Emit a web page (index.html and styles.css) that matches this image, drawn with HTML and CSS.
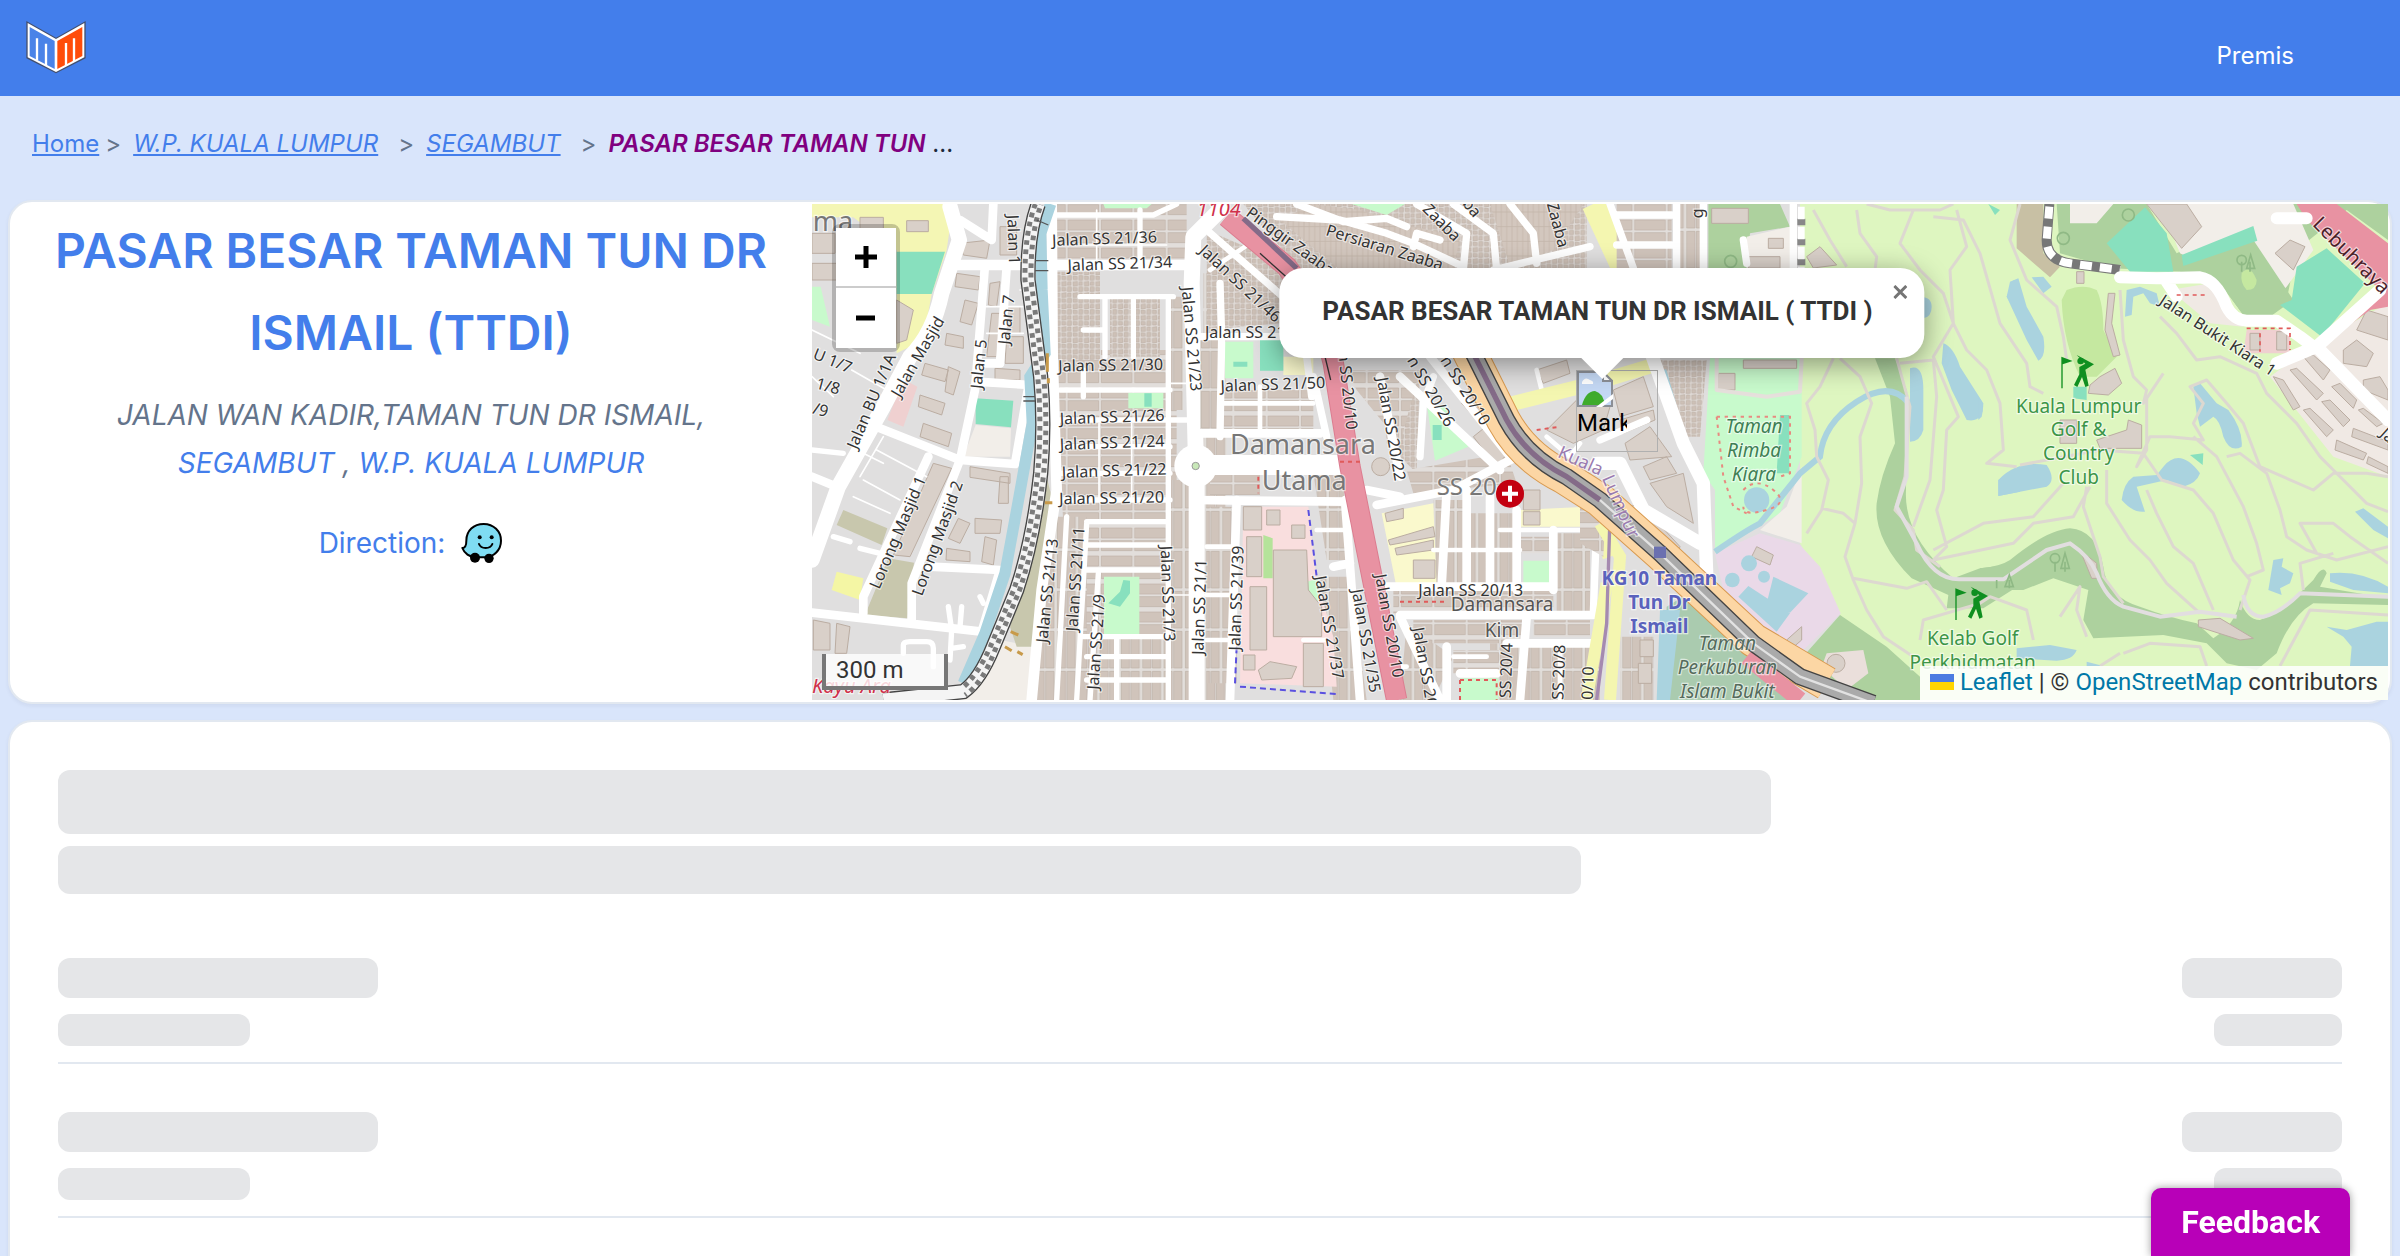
FILE: index.html
```html
<!DOCTYPE html>
<html lang="ms">
<head>
<meta charset="utf-8">
<meta name="viewport" content="width=device-width, initial-scale=1">
<title>PASAR BESAR TAMAN TUN DR ISMAIL (TTDI)</title>
<link rel="stylesheet" href="styles.css">
</head>
<body>
<div class="page">
<header class="topbar">
  <a class="logo" href="#" aria-label="Home">
    <svg width="60" height="54" viewBox="0 0 180 162">
      <path d="M1 0 90 50 179 0V112L90 157 1 112Z" fill="#44506e"/>
      <path d="M5 6 90 54 175 6V109L90 153 5 109Z" fill="#fff"/>
      <path d="M11 18 86 60V144L11 105Z" fill="#4a83e8"/>
      <path d="M169 18 94 60V144L169 105Z" fill="#ff4d0a"/>
      <path d="M33 118V52M60 132V68M120 132V66M144 120V52" fill="none" stroke="#fff" stroke-width="7"/>
    </svg>
  </a>
  <nav><a class="nav-link" href="#">Premis</a></nav>
</header>

<nav class="crumbs" aria-label="Breadcrumb">
  <a href="#">Home</a><span class="sep first">&gt;</span>
  <a class="it" href="#">W.P. KUALA LUMPUR</a><span class="sep">&gt;</span>
  <a class="it" href="#">SEGAMBUT</a><span class="sep">&gt;</span>
  <span class="here"><em>PASAR BESAR TAMAN TUN</em> ...</span>
</nav>

<main class="content">
<section class="card place">
  <div class="info">
    <h1>PASAR BESAR TAMAN TUN DR ISMAIL (TTDI)</h1>
    <p class="address">JALAN WAN KADIR,TAMAN TUN DR ISMAIL,<br><a href="#">SEGAMBUT</a> , <a href="#">W.P. KUALA LUMPUR</a></p>
    <p class="direction">Direction:
      <a href="#" aria-label="Waze"><svg width="42" height="42" viewBox="0 0 126 126">
        <path d="M4 78C14 78 16 70 16 56 16 26 38 6 68 6S120 28 120 56 98 106 72 106H44C26 106 10 94 4 78Z" fill="#7fdcf2" stroke="#000" stroke-width="6" stroke-linejoin="round"/>
        <circle cx="42" cy="107" r="15"/><circle cx="84" cy="109" r="14"/>
        <circle cx="56" cy="46" r="6"/><circle cx="92" cy="46" r="6"/>
        <path d="M54 66C60 82 88 82 94 66" fill="none" stroke="#000" stroke-width="6" stroke-linecap="round"/>
      </svg></a>
    </p>
  </div>

  <div class="map">
    <svg class="tiles" viewBox="36 42 4728 1488" preserveAspectRatio="xMidYMid slice" aria-hidden="true">
      <defs>
        <pattern id="homes" width="16" height="44" patternUnits="userSpaceOnUse"><rect width="16" height="44" fill="#d3c7be"/><path d="M0 22H16M8 0V44" stroke="#c2b3a8" stroke-width="2"/></pattern>
        <pattern id="estate" width="100" height="84" patternUnits="userSpaceOnUse"><rect width="100" height="84" fill="#e2dedb"/><path d="M4 6H96V36H4ZM4 44H96V74H4Z" fill="#d0c4bb" stroke="#beb0a6" stroke-width="2"/></pattern>
        <pattern id="estatev" width="64" height="120" patternUnits="userSpaceOnUse"><rect width="64" height="120" fill="#e2dedb"/><path d="M4 4H29V114H4ZM33 4H58V114H33Z" fill="#d0c4bb" stroke="#beb0a6" stroke-width="2"/></pattern>
        <pattern id="villas" width="34" height="34" patternUnits="userSpaceOnUse"><rect width="34" height="34" fill="#e0dad6"/><path d="M3 4 16 2 17 15 4 17ZM21 19H32V32H20ZM22 3H31V14H21ZM3 21H15V31H4Z" fill="#cec1b7" stroke="#beb0a6" stroke-width="2"/></pattern>
        <g id="golfer"><path d="M4 100V5L38 18 8 28V100Z"/><circle cx="62" cy="18" r="10"/><path d="M50 0 102 28 76 44 86 92 76 96 66 66 52 96 42 90 58 58 58 36 76 26Z"/></g>
      </defs>
      <rect x="36" y="42" width="4728" height="1488" fill="#e0dfdf"/>

      <g class="west">
        <path fill="#f4f6b4" d="M36 42H460L440 180 395 312 370 450 290 490V180L160 82H36Z"/>
        <path class="bld" d="M180 82H250V130H180ZM320 92H385V125H320ZM36 220H110V270H36ZM36 130H105V190H36ZM290 330 340 360 320 450 290 460ZM470 250 540 260 535 300 465 290ZM495 330 535 340 515 405 480 395ZM440 430 490 440V475L435 465ZM375 520 445 540 435 575 365 555ZM445 530 480 545 460 615 435 605ZM360 615 435 640 425 675 355 650ZM370 700 455 730 445 770 360 740ZM510 830 630 850V880L510 862ZM600 860H625V940H595ZM525 985 605 990 600 1030H525ZM475 985 510 1000 480 1060 445 1045ZM440 1075 510 1085V1115L438 1110ZM555 1040 590 1050 580 1125 545 1115ZM480 160 570 150 560 205 490 195ZM600 110H650V195H600ZM570 280 600 275 590 350 565 345ZM585 535 660 540V570L585 568ZM400 820 455 835 330 1100 280 1095ZM40 1290 90 1300V1380H40ZM110 1300 150 1310 140 1390H105ZM575 370H600L590 500H560ZM620 350H660V430H615ZM620 440H670V520H615Z"/>
        <path fill="#88e0be" d="M290 185H435L395 312H290ZM527 625 640 632 633 712 527 702Z"/>
        <path fill="#c8facc" d="M36 290H62L90 410 36 390Z"/>
        <path fill="#efd0d0" d="M310 568 352 590 310 710 262 690Z"/>
        <path fill="#f2eee9" d="M527 705 633 715 630 800H490Z"/>
        <path fill="#c8c7ad" d="M130 960 262 1015 245 1065 110 1005ZM265 1105 342 1118 322 1285 195 1275Z"/>
        <path fill="#f4f6a4" d="M110 1145 190 1165 180 1230 95 1200Z"/>
        <path fill="url(#estate)" d="M760 42H1160V240H760ZM760 480H1130V1000H790ZM850 960H1110V1340H740Z"/>
        <path fill="url(#villas)" d="M770 245H900V510H770ZM930 320H1080V500H930Z"/>
        <path fill="url(#estatev)" d="M1110 320H1150V660H1110ZM700 980H860V1530H700ZM860 1340H1110V1530H860ZM1110 870H1170V1530H1110ZM1210 250H1280V1530H1210Z"/>
        <path fill="#f2eee9" d="M600 1350 700 1370V1530H480Z"/>
        <path fill="#c8c7ad" d="M740 860 762 950 740 1150 700 1370H650L630 1310 700 1050Z"/>
        <path fill="#c8facc" d="M910 42H1055L1040 55H915ZM985 608H1090V655H985ZM912 1160H1018V1335H912Z"/>
        <path fill="#88e0be" d="M1033 610H1055V650H1033ZM970 1170 990 1172V1210L960 1250 925 1240 960 1205Z"/>
        <g class="roads">
          <path stroke-width="46" d="M450 50 478 150 425 310Q400 430 330 500L250 650 115 890 36 1110"/>
          <path stroke-width="26" d="M240 715 480 810 645 822 690 560M555 225 525 600 480 810M385 800 190 1220V1270M480 810 335 1180V1290M36 1268 545 1325 600 1140 390 1130M36 860 110 890M480 90 575 150 580 42M620 230 600 520 550 520M530 575 690 585"/>
          <path stroke-width="16" d="M36 780 130 790M100 1040 150 1055M180 1075 240 1090M540 1220 550 1240M445 1250 455 1320 450 1410M485 1250 480 1310M490 1370 455 1375M310 1390V1365Q310 1355 330 1355H380Q400 1355 400 1375V1430"/>
          <path stroke-width="32" d="M470 225H1160M755 42 758 500 770 900 725 1200 695 1530"/>
          <path stroke-width="48" d="M1260 60 1180 140 1175 280 1187 780M1190 870V1530"/>
          <path stroke-width="16" d="M1105 330V1530M760 75H1060L1130 42M840 320H1120M850 420H915M915 320V500M1000 330V500M850 540V620M780 600H1110M780 690H1160M780 770H1110M780 850H1110M780 930H1110M860 995H1105M860 1065H1105M860 1140H1105M850 1340H1110M860 1400H1100M860 1470H1100M1020 60V230M800 980 770 1530M860 1000 830 1530M895 1150 870 1530M950 1340V1530"/>
          <path stroke-width="5" d="M155 540 260 600M190 790 250 820M36 420 180 490M36 560 100 620M230 780 380 860M190 870 300 930M160 920 270 970M250 740 180 860M660 300H690M560 350H670M560 430H670M850 165H1100M897 700V930M995 700V930M890 60V240M1110 580H1220M1110 1215H1220"/>
        </g>
        <path class="water" stroke-width="34" d="M752 42 722 130 726 300 735 490 690 560 697 700 650 960 615 1150 555 1330 490 1480"/>
        <path class="rail0" d="M715 42Q682 130 684 270L722 560Q735 700 722 850 700 1050 650 1200L580 1370Q540 1470 490 1505L250 1530"/>
        <path class="rail1" d="M715 42Q682 130 684 270L722 560Q735 700 722 850 700 1050 650 1200L580 1370Q540 1470 490 1505L250 1530"/>
        <path class="rail2" d="M706 42Q673 130 675 270L713 560Q726 700 713 850 691 1050 641 1200L571 1370Q531 1460 485 1495"/>
        <path class="rail2 alt" d="M724 42Q691 130 693 270L731 560Q744 700 731 850 709 1050 659 1200L589 1370Q549 1480 495 1515"/>
        <path stroke="#555" stroke-width="4" fill="none" d="M705 212H745M705 242H745M670 620H705M670 633H705M710 90 745 105"/>
        <path stroke="#c89a4a" stroke-width="9" fill="none" d="M742 490V545M745 565V580M735 938H757M632 1325 655 1335M615 1370 635 1382M652 1385 668 1394"/>
      </g>

      <g transform="translate(1200 0)">
        <path fill="url(#villas)" d="M20 120 300 240 240 400 20 420ZM130 42H1160V240H300ZM550 560 660 540 650 850 560 760Z"/>
        <path fill="url(#homes)" d="M340 42 480 60 640 110 780 140 760 240 420 240 240 90ZM870 42H1150L1060 180 930 230Z"/>
        <path fill="url(#estatev)" d="M0 450H60V720H0ZM20 950H110V1480H20ZM340 850 430 850 440 1110 380 1110ZM360 1160H450L500 1530H400ZM700 930H790V1180H700ZM810 970H950V1180H810ZM1070 1030H1170V1270H1070ZM620 1300 760 1400 700 1530H600ZM870 1360H1200V1530H870Z"/>
        <path fill="url(#estate)" d="M70 600H340V720H70ZM30 850H180V915H30ZM440 540 660 540 600 760 470 600ZM960 1040H1060V1090H960ZM580 1200H1060V1270H580ZM640 1290H980V1360H640ZM760 1380H900V1450H760ZM1000 1290H1170V1340H1000ZM620 840 920 790 950 880 640 910Z"/>
        <path fill="#f9dede" d="M130 950H325L350 1170 400 1340 410 1490 120 1480Z"/>
        <path fill="#faf9cd" d="M545 970 700 940 710 1195H590ZM960 960 1160 950 1170 1010H960ZM250 500H340V555H250Z"/>
        <path fill="#c8facc" d="M75 455H160V565H75ZM455 42H615L560 75ZM680 640 735 650 805 770 705 812ZM970 1112H1055V1185H970ZM322 1175 355 1165V1235L325 1215ZM780 1465H895V1530H780Z"/>
        <path fill="#b5e39a" d="M190 1035 218 1045V1165H190Z"/>
        <path fill="#88e0be" d="M180 445H250V542H180ZM698 705 725 705V750H698ZM100 515H142V530H100Z"/>
        <path class="bld" d="M220 1080H320L325 1200 365 1250V1340H220ZM140 1040H185V1160H140ZM150 1190H200V1380H150ZM130 950H185V1020H130ZM200 960H240V1005H200ZM275 1005H315V1045H275ZM310 1360H370V1490H310ZM130 1395H165V1440H130ZM175 1440 210 1415 290 1430 275 1465 185 1470ZM970 900H1020V960H970ZM970 965H1020V1005H970ZM555 970 610 955V985L560 995ZM565 1050 700 1010 705 1040 570 1065ZM585 1075 700 1050V1080L590 1095ZM640 1110H705V1165H640ZM1140 620 1230 650 1210 720 1120 760 1040 720ZM820 740 870 700 930 780 890 830ZM1010 540 1100 510 1110 550 1030 580ZM785 640 830 600 870 660 830 690Z"/>
        <circle cx="542" cy="830" r="27" class="bld"/>
        <g class="roads">
          <path stroke-width="60" d="M30 825H430"/>
          <path stroke-width="26" d="M-20 930 440 935M530 945 760 900 950 800M110 930 90 1530M435 930 480 1530M400 1130 450 1120M560 1190H1060M600 1275H1180M740 900 725 1190M800 900V1190M870 920V1190M950 960V1200M1060 1020V1200M600 1280 720 1530M740 1370V1530M980 1280 960 1530M920 1360H1180M780 1450H890M600 860 540 560M600 560 900 840M690 500 930 800M0 730H360M500 900 600 920"/>
          <path stroke-width="22" d="M60 280 65 440 60 740M230 80 420 90 560 130 640 160 790 230M650 42 800 130 790 240M760 42 880 130 890 240M930 42 1000 130 1010 220M620 110 560 85 430 95 290 42M640 170 650 130 720 150M880 240 1170 170M340 560 380 740M660 800 670 640 700 560M1180 1270 1190 1000 1160 950 960 820M320 500 335 620M20 120 260 330M0 440 260 440"/>
          <path stroke-width="14" d="M900 1020H1160M700 1080H960M760 1400 860 1400M180 590V720M70 640H340M350 1020H430M20 1070H110M20 1215H110M20 1350H110M560 1430H620M310 1350H380M1080 1360V1530M150 160 30 240M1010 540 1030 620M1040 740 1110 800 1140 760"/>
        </g>
        <path fill="#fff" d="M-13 764A64 64 0 1 0 -13 892 64 64 0 1 0 -13 764Z"/>
        <circle cx="-13" cy="828" r="11" fill="#c8e8b8" stroke="#999" stroke-width="3"/>
        <path fill="none" stroke="#dc7d90" stroke-width="64" d="M80 80 260 230Q370 380 400 520L450 830 520 1180 590 1530"/>
        <path fill="none" stroke="#e892a2" stroke-width="58" d="M80 80 260 230Q370 380 400 520L450 830 520 1180 590 1530"/>
        <path fill="none" stroke="#846b88" stroke-width="16" d="M130 85 290 235"/><path fill="none" stroke="#333" stroke-width="4" d="M180 190 260 262M375 500 392 570"/>
        <path fill="none" stroke="#e05a5a" stroke-width="6" stroke-dasharray="12 12" d="M780 1470H890V1530M780 1470V1530M600 1235H740M1010 720 1080 710M940 740 960 780M420 815H480M175 860V910"/>
        <path fill="none" stroke="#5a50e0" stroke-width="6" stroke-dasharray="18 12" d="M120 1490 410 1512M325 960 350 1160M105 1480 110 1370"/>
        <path fill="none" stroke="#f4f6b0" stroke-width="70" d="M1180 42 1290 280"/>
        <path fill="none" stroke="#f4f6b0" stroke-width="44" d="M900 650 1180 580 1380 520M1180 960 1230 1100"/>
      </g>

      <g transform="translate(2400 0)">
        <path fill="url(#estate)" d="M50 42H215V234H50ZM-60 860 20 900 10 1100-60 1060Z"/>
        <path fill="url(#villas)" d="M180 510H320L300 740 250 740Z"/>
        <path fill="url(#estatev)" d="M240 42H300V234H240ZM60 1340H160V1530H60Z"/>
        <path fill="#add19e" d="M325 42H540L570 110 450 130 440 234H325Z"/>
        <path fill="#def6c0" d="M600 42H2400V1530H900L720 1275 600 1060Z"/>
        <path fill="#c8facc" d="M330 505H605V800L540 970 345 1090V900L310 850Z"/>
        <path fill="#f2eee9" d="M605 830V1060L480 1020 560 950ZM440 140 570 110 580 234H440Z"/>
        <path fill="#88e0be" d="M540 675H568V850H530Z"/>
        <path fill="#ead9e8" d="M345 1090 480 1030 600 1065 660 1130 722 1270 590 1400 370 1200Z"/>
        <path fill="#aacbaf" d="M200 1250 280 1200 560 1440 600 1530H190Z"/>
        <path fill="#add19e" d="M720 1275 860 1370 960 1460V1530H800L600 1410ZM825 505H885L920 600 918 900Q910 1040 1060 1165L1140 1135 1260 1120V1185L1150 1255H1040L1045 1215 935 1165Q820 1050 830 940 840 860 885 760L870 620Z"/>
        <path fill="#eadfdb" d="M680 1390 790 1380 805 1450 740 1500 665 1430Z"/>
        <path class="bld" d="M335 55H445V100H335ZM445 200H540V234H445ZM505 145H550V175H505ZM620 200 660 170 710 225 640 234ZM40 600 130 560 160 650 60 680ZM60 690 160 660 165 690 70 730ZM75 760 150 710 215 800 90 810ZM150 880 250 850 280 1000 200 950ZM130 830 200 800 230 850 150 870ZM90 950 120 940 240 1070 230 1095ZM430 510H590V535H430ZM355 550H405V600H355ZM470 1070 520 1095 510 1125 455 1100ZM560 1350 605 1310V1350L570 1380ZM120 1350H160V1400H120ZM115 1420H155V1480H115Z"/>
        <circle cx="708" cy="1420" r="27" class="bld"/>
        <path fill="#aad3df" d="M445 1188 570 1270 530 1325 415 1220ZM520 1160 625 1210 570 1268 500 1240ZM180 1260H240L210 1530H170ZM930 535Q970 520 970 600V720Q960 755 930 755ZM1030 460Q1060 470 1080 530L1150 640Q1150 700 1100 690L1055 600 1025 520ZM960 320Q995 320 995 350T970 385ZM1240 270Q1260 300 1270 340V400L1220 320ZM1195 870 1260 830V905L1195 918Z"/>
        <g fill="#aad3df"><circle cx="470" cy="930" r="38"/><circle cx="447" cy="1120" r="24"/><circle cx="397" cy="1170" r="22"/><circle cx="492" cy="1160" r="18"/></g>
        <path class="water" stroke-width="18" d="M345 1085Q440 1020 480 1000L600 850 660 800Q670 700 770 635T925 638M190 540 250 750"/>
        <path fill="none" stroke="#e88a80" stroke-width="6" stroke-dasharray="10 14" d="M350 680H570V850L540 860M350 680 370 860 400 950 440 970M430 900Q470 860 520 900T500 960 430 950"/>
        <g class="roads">
          <path stroke-width="40" d="M150 480 250 760 310 880 320 1150M-10 820 60 820 130 960 300 1060"/>
          <path stroke-width="22" d="M30 42 100 234M230 42V234M50 75H215M50 165H215M310 42V234M580 42V234M0 750 140 690M430 150 440 220"/>
          <path stroke-width="12" stroke="#e6e0dc" d="M350 505V600L500 620 600 605 605 505"/>
        </g>
        <path fill="none" stroke="#888" stroke-width="24" stroke-dasharray="20 40" d="M604 86V234"/>
        <path fill="none" stroke="#fff" stroke-width="20" stroke-dasharray="38 22" d="M604 50V234"/>
        <path fill="none" stroke="#f4f6b0" stroke-width="36" d="M0 1000 60 1100 30 1530M-40 1530 20 1180"/>
        <path fill="none" stroke="#a58ab0" stroke-width="10" d="M30 980 20 1300-10 1530"/>
      </g>

      <!-- expressway and rail corridor -->
      <g fill="none" stroke-linejoin="round">
        <path stroke="#d89a50" stroke-width="104" d="M1995 460 2110 690Q2170 800 2290 860L2400 930 2580 1090 2860 1350 3080 1480"/>
        <path stroke="#fcd6a4" stroke-width="98" d="M1995 460 2110 690Q2170 800 2290 860L2400 930 2580 1090 2860 1350 3080 1480"/>
        <path stroke="#e892a2" stroke-width="50" d="M2840 1400 3000 1530"/>
        <path stroke="#444" stroke-width="52" d="M2005 460 2120 690Q2180 800 2300 860L2400 930 2580 1090 2860 1360 3000 1460 3220 1540"/>
        <path stroke="#aaa" stroke-width="44" d="M2005 460 2120 690Q2180 800 2300 860L2400 930 2580 1090 2860 1360 3000 1460 3220 1540"/>
        <path stroke="#846b88" stroke-width="16" d="M2005 460 2120 690Q2180 800 2300 860L2400 930"/>
        <path stroke="#e2e2e2" stroke-width="7" d="M2400 930 2580 1090 2860 1360 3000 1460 3220 1540"/>
      </g>
      <rect x="2562" y="1070" width="36" height="34" fill="#6a70b0"/>

      <g transform="translate(3540 0)">
        <path fill="#c8c0a4" d="M110 42H190V190L240 230 210 262 110 175Z"/>
        <path fill="#add19e" d="M230 42H500L590 190 900 42H1224V150L1100 60 950 180 920 330 870 380 790 375 720 280 600 245 400 235 240 190ZM0 1135Q60 1130 90 1110 200 1020 270 1015 350 1020 370 1130 380 1220 480 1250 560 1280 650 1300L700 1345Q770 1300 780 1230 800 1290 840 1290 900 1270 1000 1170 1030 1120 1040 1150L1020 1190 1224 1225V1245L1000 1240Q930 1280 890 1390L830 1440 740 1420 680 1360 550 1335 340 1345 310 1290 325 1200 220 1165 130 1200 0 1200Z"/>
        <path fill="#f2eee9" d="M270 42H400L350 100H270ZM540 42H940L1000 180 920 290 880 330 600 190Z"/>
        <path fill="#add19e" d="M600 200 820 150 940 330 870 380 790 375 720 280 600 240Z"/>
        <path fill="#88e0be" d="M380 160 495 52 560 130 580 245H450ZM605 195 820 108 832 152 610 228ZM950 230 1040 175 1155 280 1025 440 900 345 935 330ZM25 42 60 60 45 75ZM630 795 670 790 668 825ZM280 590H320V630L280 625ZM1210 640 1224 630V670Z"/>
        <path fill="#c5e8a0" d="M260 300Q310 280 350 300 370 340 370 420L410 500 350 560H300Q250 460 245 330ZM785 250Q810 220 830 270 830 300 800 300 780 280 785 250Z"/>
        <path class="bld" d="M500 42H620L665 110 605 175ZM885 190 930 150 975 170 940 240ZM385 310H405L395 400 420 495 400 500 375 420ZM330 585 360 560 405 535 425 580 385 615 325 610ZM290 245H312V280H290ZM350 750 440 720 445 690 485 705V775H360ZM240 690H290V760H240ZM655 1290 720 1285 820 1345 780 1350 655 1310ZM300 1080 350 1120 352 1165 335 1165Z"/>
        <path fill="#efd0d0" d="M800 420H930V490H790Z"/>
        <path fill="#f0e9e4" d="M1040 440 1224 340V860L1060 800 870 560 980 480ZM570 300 690 280 790 410 690 400Z"/>
        <path class="bld" d="M1160 360 1224 380V450L1130 420ZM1090 480 1130 450 1180 490 1160 530 1090 520ZM1150 570 1200 560 1224 600V630L1150 600ZM880 560 910 570 960 650 940 660ZM930 540 950 535 1030 610 1010 630ZM970 500 1000 495 1050 540 1030 570ZM970 660 990 655 1060 720 1040 740ZM1025 635 1050 630 1110 690 1090 710ZM1055 590 1080 580 1130 630 1120 655ZM1070 750 1160 790 1150 810 1065 780ZM1120 715 1224 755V780L1115 740ZM1135 660 1150 655 1210 700 1190 710ZM1165 800 1224 830V850L1160 820ZM810 430H840V480H810ZM890 425H920V480H890Z"/>
        <path fill="#aad3df" d="M90 275 115 265 140 350 190 440Q200 500 175 512L140 450 80 320ZM155 262 190 260 215 290 190 310ZM440 300 480 290 530 310 540 350 510 340 490 310 460 320 455 375 435 380ZM640 590 660 580 710 640 745 660Q790 720 785 770 750 790 730 740 720 690 700 680L660 710 650 670ZM550 830Q600 770 660 850 650 880 610 890L560 870 470 890 495 965Q460 970 425 930 430 880 460 860L530 855ZM55 870Q110 810 200 825 230 870 200 890L55 918ZM1125 965 1150 955 1224 1010V1045L1180 1020ZM880 1110 910 1105 905 1130 940 1150 930 1180 900 1195 905 1215 865 1200ZM1050 1150Q1140 1140 1224 1190V1210L1120 1200 1050 1175ZM1040 1310 1100 1320 1190 1295H1224V1428H1110L1115 1370 1090 1340ZM110 1375 210 1365 290 1380Q280 1410 230 1412L110 1405ZM320 1415 370 1428H320Z"/>
        <path fill="#aad3df" d="M-5 620Q15 640 5 680L-5 690Z"/>
        <path fill="#e892a2" d="M950 42H1070L1224 160V350L1170 360 1060 440 1030 430 1190 290 980 90Z"/>
        <path fill="none" stroke="#777" stroke-width="30" d="M208 42 200 150Q200 210 270 220L420 240"/>
        <path fill="none" stroke="#fff" stroke-width="24" stroke-dasharray="36 24" d="M208 50 200 150Q200 210 270 220L420 240"/>
        <g class="roads">
          <path stroke-width="36" d="M420 262 530 265 660 262Q710 270 740 350 760 390 800 392L890 392 960 440 1000 470M560 275 590 320M890 85H980"/>
          <path stroke-width="38" d="M890 520 1010 470 1200 300M1010 470 1224 690"/>
        </g>
        <path fill="none" stroke="#e05a5a" stroke-width="5" stroke-dasharray="12 12" d="M590 315H680M800 415H930V480M840 430V485"/>
      </g>

      <!-- golf course cart paths -->
      <g fill="none">
        <path class="cart0" d="M3040 60 3090 150 3140 230M3170 60 3180 130 3230 200 3225 240M3100 505 3060 590 3020 640 3045 720 3050 800 3085 870 3065 960 3020 1030M3120 505 3180 560 3215 640 3180 740 3185 880 3165 1000 3135 1100 3160 1170 3200 1260 3250 1340 3340 1400M3065 955 3130 970 3165 1000M3160 1165 3320 1195 3380 1175 3440 1260M3200 42 3270 60 3420 60 3460 42M3340 60 3300 160 3360 240 3430 310 3460 400 3400 500 3450 620 3475 680 3440 720 3430 900 3410 960 3440 1070 3400 1110M3470 60 3500 170 3450 240 3460 400 3500 480 3560 540 3600 640 3610 780 3560 820 3650 830M3400 80 3490 90 3540 190 3600 400 3680 520 3690 590 3730 610M3660 42 3630 150 3680 270 3770 350 3790 440 3800 510M3290 505 3330 650 3315 860 3285 960 3340 1020 3350 1080 3420 1130M3300 520 3400 510 3410 620 3390 870 3340 1010M3960 300 3970 450 4000 560 4040 600 4030 640 4090 550M4040 620 4040 780 4010 830 4050 740 4110 740 4210 750 4180 700 4210 640 4170 590 4220 570 4280 640 4330 700 4380 830 4540 900 4600 850 4700 850 4764 860M4080 380 4130 430 4190 510 4260 500 4370 550 4400 610 4490 700 4560 800 4600 840 4700 940 4764 965M3660 825 3900 780 4030 790 4085 870 4180 900 4240 970 4300 1110 4350 1170 4320 1260M4180 740 4250 800 4330 950 4370 1060 4390 1140 4340 1160M4280 800 4320 790 4400 850 4440 960 4460 1040 4520 1080 4610 1110 4764 1070M4550 1090 4500 1000 4600 1000 4650 1040 4764 1120M4510 1200 4500 1120 4600 1090M4040 900 4070 970 4120 1070 4180 1120 4240 1260M3920 840 3920 940 3990 1050 4050 1110 4100 1180 4200 1270M3860 890 3850 950 3900 1100 3910 1160 3970 1240M3400 1110 3640 1060 3700 1000 3820 980 3870 890M3400 1080 3550 1000 3700 980 3790 880M3360 1350 3370 1290 3540 1240 3570 1220 3680 1260 3700 1350M3780 1280 3840 1190 3830 1260 3860 1340M3970 1390 4050 1360 4200 1370 4220 1428M4440 1428 4530 1260 4764 1275M3900 1428 3960 1390"/>
        <path class="cart1" d="M3320 620V860L3290 950 3350 1060Q3400 1170 3480 1168H3610L3740 1080 3810 1060Q3870 1100 3890 1150 3920 1230 3970 1250L4080 1280 4200 1265 4310 1280M4330 1215Q4340 1280 4390 1280 4440 1270 4500 1210L4764 1220"/>
      </g>
      <g fill="#0f8f20"><use href="#golfer" x="3780" y="495"/><use href="#golfer" x="3462" y="1190"/></g>
      <g fill="none" stroke="#8fb985" stroke-width="5"><path d="M4325 245V215M4350 245V215M4340 235 4352 195 4364 235ZM3765 1145V1115M3795 1145V1115M3783 1135 3795 1090 3808 1135ZM3590 1195V1170M3628 1195V1170M3615 1190 3628 1155 3640 1190Z"/><circle cx="4325" cy="210" r="14"/><circle cx="3765" cy="1105" r="14"/><circle cx="3790" cy="145" r="18"/><circle cx="3985" cy="75" r="18"/><circle cx="2792" cy="214" r="18"/></g>
      <circle cx="2130" cy="911" r="42" fill="#c30010"/><path d="M2130 887V935M2106 911H2154" stroke="#fff" stroke-width="12"/>

      <g class="street">
        <text transform="translate(757 168) rotate(-2)">Jalan SS 21/36</text>
        <text transform="translate(803 243) rotate(-2)">Jalan SS 21/34</text>
        <text transform="translate(775 545) rotate(-1)">Jalan SS 21/30</text>
        <text transform="translate(780 703) rotate(-2)">Jalan SS 21/26</text>
        <text transform="translate(780 780) rotate(-2)">Jalan SS 21/24</text>
        <text transform="translate(786 864) rotate(-2)">Jalan SS 21/22</text>
        <text transform="translate(778 943) rotate(-1)">Jalan SS 21/20</text>
        <text transform="translate(622 75) rotate(88)">Jalan 1</text>
        <text transform="translate(628 465) rotate(-84)">Jalan 7</text>
        <text transform="translate(545 598) rotate(-84)">Jalan 5</text>
        <text transform="translate(300 625) rotate(-60)">Jalan Masjid</text>
        <text transform="translate(170 780) rotate(-67)">Jalan BU 1/1A</text>
        <text transform="translate(238 1200) rotate(-67)">Lorong Masjid 1</text>
        <text transform="translate(366 1220) rotate(-70)">Lorong Masjid 2</text>
        <text transform="translate(36 505) rotate(22)">U 1/7</text>
        <text transform="translate(45 595) rotate(15)">1/8</text>
        <text transform="translate(36 670) rotate(15)">/9</text>
        <text transform="translate(742 1360) rotate(-84)">Jalan SS 21/13</text>
        <text transform="translate(832 1325) rotate(-86)">Jalan SS 21/11</text>
        <text transform="translate(895 1500) rotate(-86)">Jalan SS 21/9</text>
        <text transform="translate(1082 1068) rotate(88)">Jalan SS 21/3</text>
        <text transform="translate(1145 292) rotate(85)">Jalan SS 21/23</text>
        <text transform="translate(1210 1395) rotate(-88)">Jalan SS 21/1</text>
        <text transform="translate(1215 445)">Jalan SS 21/48</text>
        <text transform="translate(1262 605) rotate(-2)">Jalan SS 21/50</text>
        <text transform="translate(1195 185) rotate(43)">Jalan SS 21/46</text>
        <text transform="translate(1335 75) rotate(36)">Pinggir Zaaba</text>
        <text transform="translate(1575 135) rotate(17)">Persiaran Zaaba</text>
        <text transform="translate(1865 60) rotate(45)">Zaaba</text>
        <text transform="translate(1985 42) rotate(50)">ba</text>
        <text transform="translate(2240 42) rotate(75)">Zaaba</text>
        <text transform="translate(1612 460) rotate(84)">an SS 20/10</text>
        <text transform="translate(1730 565) rotate(80)">Jalan SS 20/22</text>
        <text transform="translate(1820 510) rotate(60)">n SS 20/26</text>
        <text transform="translate(1920 510) rotate(58)">n SS 20/10</text>
        <text transform="translate(1320 1382) rotate(-88)">Jalan SS 21/39</text>
        <text transform="translate(1545 1160) rotate(80)">Jalan SS 21/37</text>
        <text transform="translate(1655 1200) rotate(80)">Jalan SS 21/35</text>
        <text transform="translate(1725 1155) rotate(80)">Jalan SS 20/10</text>
        <text transform="translate(1838 1315) rotate(80)">Jalan SS 20</text>
        <text transform="translate(1855 1218)">Jalan SS 20/13</text>
        <text transform="translate(2132 1525) rotate(-88)">SS 20/4</text>
        <text transform="translate(2290 1530) rotate(-88)">SS 20/8</text>
        <text transform="translate(2378 1530) rotate(-88)">0/10</text>
        <text transform="translate(2710 85) rotate(-90)">g</text>
        <text transform="translate(4075 340) rotate(33)">Jalan Bukit Kiara 1</text>
        <text transform="translate(4738 735) rotate(42)">Jal</text>
      </g>
      <text class="lebuh" transform="translate(4535 105) rotate(45)">Lebuhraya</text>
      <g class="redlab"><text x="1190" y="78">1104</text><text x="36" y="1508">Kayu Ara</text></g>
      <text class="purp" transform="translate(2270 800) rotate(24)">Kuala</text><text class="purp" transform="translate(2405 865) rotate(66)">Lumpur</text>
      <g class="suburb"><text x="38" y="122">ma</text><text x="1290" y="792">Damansara</text><text x="1385" y="900">Utama</text></g>
      <text class="ss" x="1910" y="915">SS 20</text>
      <g class="village" text-anchor="middle"><text x="2106" y="1264">Damansara</text><text x="2106" y="1340">Kim</text></g>
      <g class="station" text-anchor="middle"><text x="2578" y="1186">KG10 Taman</text><text x="2578" y="1258">Tun Dr</text><text x="2578" y="1328">Ismail</text></g>
      <g class="park" text-anchor="middle"><text x="2862" y="730">Taman</text><text x="2862" y="802">Rimba</text><text x="2862" y="874">Kiara</text></g>
      <g class="grave" text-anchor="middle"><text x="2782" y="1380">Taman</text><text x="2782" y="1452">Perkuburan</text><text x="2782" y="1524">Islam Bukit</text></g>
      <g class="golf" text-anchor="middle"><text x="3836" y="668">Kuala Lumpur</text><text x="3836" y="738">Golf &amp;</text><text x="3836" y="810">Country</text><text x="3836" y="881">Club</text><text x="3518" y="1364">Kelab Golf</text><text x="3518" y="1436">Perkhidmatan</text></g>
    </svg>

    <div class="marker">
      <svg width="36" height="36" viewBox="0 0 36 36" aria-hidden="true">
        <path d="M1 1H26L35 10V35H1Z" fill="#c4d8f4" stroke="#8b8f96" stroke-width="2"/>
        <path d="M26 1V10H35Z" fill="#fff" stroke="#8b8f96" stroke-width="2"/>
        <path d="M5 11Q8 5 13 9 17 10 16 13H5Z" fill="#fff"/>
        <path d="M5 34Q9 20 18 20 26 22 28 34Z" fill="#3fab2c"/>
        <path d="M36 23 19 36H25L36 28Z" fill="#fff"/>
      </svg>
      <span>Marker</span>
    </div>

    <div class="popup">
      <strong>PASAR BESAR TAMAN TUN DR ISMAIL ( TTDI )</strong>
      <button class="close" type="button" aria-label="Close popup"><svg width="14" height="14" viewBox="0 0 14 14"><path d="M1 1 13 13M13 1 1 13" stroke="#757575" stroke-width="3"/></svg></button>
    </div>

    <div class="zoom">
      <button type="button" aria-label="Zoom in"><svg width="22" height="22" viewBox="0 0 22 22"><path d="M11 0V22M0 11H22" stroke="#000" stroke-width="5"/></svg></button>
      <button type="button" aria-label="Zoom out"><svg width="22" height="22" viewBox="0 0 22 22"><path d="M1 11H20" stroke="#000" stroke-width="5"/></svg></button>
    </div>
    <div class="scale">300 m</div>
    <div class="credit"><svg width="24" height="16" viewBox="0 0 24 16" aria-hidden="true"><path fill="#4c7be1" d="M0 0H24V8H0Z"/><path fill="#ffd500" d="M0 8H24V16H0Z"/></svg> <a href="#">Leaflet</a> | © <a href="#">OpenStreetMap</a> contributors</div>
  </div>
</section>

<section class="card loading" aria-busy="true">
  <div class="bar title"></div>
  <div class="bar subtitle"></div>
  <div class="row"><div class="stack"><div class="bar name"></div><div class="bar unit"></div></div><div class="stack end"><div class="bar price"></div><div class="bar date"></div></div></div>
  <div class="row"><div class="stack"><div class="bar name"></div><div class="bar unit"></div></div><div class="stack end"><div class="bar price"></div><div class="bar date"></div></div></div>
</section>
</main>
</div>
<button class="feedback" type="button">Feedback</button>
</body>
</html>
```

FILE: styles.css
```css
* { box-sizing: border-box; }
body { margin: 0; background: #d9e5fb; color: #1e293b; font-family: Inter, "Noto Sans", sans-serif; font-size: 24px; }
a { color: #437eeb; text-decoration: none; }
button { font: inherit; cursor: pointer; }
svg { display: block; }
.page { display: flex; flex-direction: column; min-height: 100vh; }

.topbar { display: flex; align-items: center; justify-content: space-between; height: 96px; padding: 0 106px 0 26px; background: #437eeb; }
.nav-link { display: block; padding-top: 14px; color: #fff; }

.crumbs { display: flex; align-items: center; height: 96px; padding: 0 32px 2px; white-space: nowrap; }
.crumbs a { text-decoration: underline; text-decoration-thickness: 2px; text-underline-offset: 2px; }
.crumbs .it { font-style: italic; }
.crumbs .sep { margin: 0 12px 0 20px; color: #64748b; }
.crumbs .first { margin-left: 6px; }
.crumbs em { color: #800080; font-weight: 600; }

.content { display: flex; flex: 1; flex-direction: column; gap: 16px; padding: 8px 8px 0; }
.card { background: #fff; border: 2px solid #e2e8f0; border-radius: 24px; box-shadow: 0 2px 4px rgba(30, 41, 59, .06); }

.place { display: grid; grid-template-columns: 802fr 1578fr; min-height: 504px; }
.info { text-align: center; padding: 8px 32px; }
h1 { margin: 0; color: #437eeb; font-size: 48px; font-weight: 600; line-height: 82px; }
.address { margin: 17px 0 0; color: #64748b; font-size: 28px; font-style: italic; line-height: 48px; }
.direction { display: flex; align-items: center; justify-content: center; gap: 16px; margin: 32px 0 0; color: #437eeb; font-size: 28px; line-height: 48px; }

.map { position: relative; overflow: hidden; margin: 2px 2px 2px 0; font-family: Roboto, sans-serif; color: #333; }
.tiles { position: absolute; inset: 0; width: 100%; height: 100%; font-family: "Noto Sans", sans-serif; }
.bld { fill: #d9d0c9; stroke: #bbada2; stroke-width: 3; }
.roads { fill: none; stroke: #fff; stroke-linejoin: round; stroke-linecap: round; }
.water { fill: none; stroke: #aad3df; }
.rail0, .rail1, .rail2 { fill: none; }
.rail0 { stroke: #444; stroke-width: 46px; }
.rail1 { stroke: #f4f4f4; stroke-width: 38px; }
.rail2 { stroke: #7a7a7a; stroke-width: 15px; stroke-dasharray: 14 14; }
.rail2.alt { stroke-dashoffset: 14px; }
.cart0 { stroke: #ddd8d0; stroke-width: 9px; stroke-linejoin: round; }
.cart1 { stroke: #e2dee0; stroke-width: 12px; stroke-linejoin: round; }
.tiles text { paint-order: stroke; stroke: rgba(255, 255, 255, .6); stroke-width: 7px; }
.street { font-size: 48px; fill: #333; }
.lebuh { font-size: 60px; fill: #4a1f2a; }
.redlab { font-size: 60px; font-style: italic; fill: #d0304a; }
.purp { font-size: 54px; fill: #9a7bb0; }
.suburb { font-size: 81px; fill: #777; }
.ss { font-size: 72px; fill: #777; }
.village { font-size: 57px; fill: #555; }
.station { font-size: 57px; font-weight: 700; fill: #5a62bd; }
.park { font-size: 57px; font-style: italic; fill: #3f7f55; }
.grave { font-size: 57px; font-style: italic; fill: #556b5c; }
.golf { font-size: 57px; fill: #3c9548; }

.marker { position: absolute; left: calc(50% - 24px); top: 166px; width: 82px; height: 82px; border: 1px solid #b0b0b0; color: #000; }
.marker span { display: block; width: 50px; overflow: hidden; line-height: 32px; }
.popup { position: absolute; left: calc(50% + 2px); top: 64px; transform: translateX(-50%); display: flex; align-items: center; height: 90px; padding: 0 52px 4px 43px; border-radius: 24px; background: #fff; box-shadow: 0 6px 28px rgba(0, 0, 0, .4); font-size: 26px; white-space: nowrap; }
.popup::after { content: ""; position: absolute; left: calc(50% - 22px); top: 89px; border: 22px solid transparent; border-top-color: #fff; border-bottom: 0; }
.popup strong { font-weight: 700; }
.close { position: absolute; top: 0; right: 0; display: grid; place-items: center; width: 48px; height: 48px; padding: 0; border: 0; background: none; }
.zoom { position: absolute; left: 20px; top: 20px; border: 4px solid rgba(0, 0, 0, .2); border-radius: 8px; background-clip: padding-box; }
.zoom button { display: grid; place-items: center; width: 60px; height: 60px; padding: 0; border: 0; background: #fff; }
.zoom button:first-child { border-bottom: 2px solid #ccc; }
.scale { position: absolute; left: 10px; bottom: 10px; width: 126px; height: 36px; padding-left: 10px; border: 4px solid #777; border-top: 0; background: rgba(255, 255, 255, .8); line-height: 32px; }
.credit { position: absolute; right: 0; bottom: 0; height: 34px; padding: 0 10px; background: rgba(255, 255, 255, .85); line-height: 32px; white-space: nowrap; }
.credit svg { display: inline-block; }
.credit a { color: #0078a8; }

.loading { flex: 1; padding: 48px; border-bottom: 0; border-radius: 24px 24px 0 0; }
.bar { border-radius: 12px; background: #e5e6e8; }
.title { width: 75%; height: 64px; }
.subtitle { width: 66.66%; height: 48px; margin: 12px 0 16px; }
.row { display: flex; justify-content: space-between; padding: 48px 0 16px; border-bottom: 2px solid #e2e8f0; }
.stack { display: grid; gap: 16px; }
.end { justify-items: end; }
.name { width: 320px; height: 40px; }
.unit { width: 192px; height: 32px; }
.price { width: 160px; height: 40px; }
.date { width: 128px; height: 32px; }

.feedback { position: fixed; right: 50px; bottom: 0; height: 68px; padding: 0 30px; border: 0; border-radius: 10px 10px 0 0; background: #b800b8; box-shadow: 0 0 8px rgba(0, 0, 0, .4); color: #fff; font-family: Roboto, sans-serif; font-size: 32px; font-weight: 700; }
```
